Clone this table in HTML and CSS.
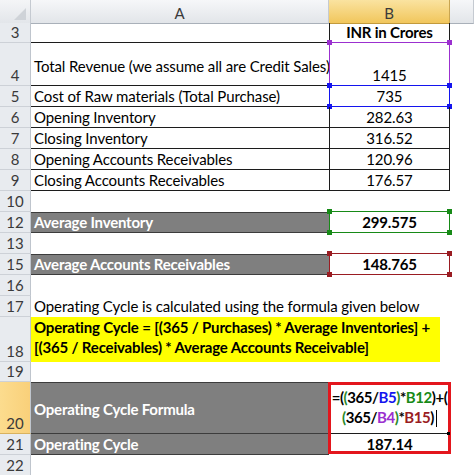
FILE: index.html
```html
<!DOCTYPE html>
<html>
<head>
<meta charset="utf-8">
<link rel="stylesheet" href="styles.css">
</head>
<body>
<div class="sheet">
  <div class="row hdr">
    <div class="corner"><svg width="31" height="23" viewBox="0 0 31 23"><polygon points="26,8 26,20 14,20" fill="#cfd3d8"/></svg></div>
    <div class="ch">A</div>
    <div class="ch sel">B</div>
    <div class="ch"></div>
  </div>

  <div class="row h20">
    <div class="rh">3</div>
    <div class="c a t"></div>
    <div class="c b t bold">INR in Crores</div>
    <div class="c"></div>
  </div>

  <div class="row h43">
    <div class="rh">4</div>
    <div class="c a t mid">Total Revenue (we assume all are Credit Sales)</div>
    <div class="c b t">1415<span class="ref purple"><i class="hd tl"></i><i class="hd tr"></i><i class="hd bl"></i><i class="hd br"></i></span></div>
    <div class="c"></div>
  </div>

  <div class="row h21">
    <div class="rh">5</div>
    <div class="c a t">Cost of Raw materials (Total Purchase)</div>
    <div class="c b t">735<span class="ref blue"><i class="hd tl"></i><i class="hd tr"></i><i class="hd bl"></i><i class="hd br"></i></span></div>
    <div class="c"></div>
  </div>

  <div class="row h21">
    <div class="rh">6</div>
    <div class="c a t">Opening Inventory</div>
    <div class="c b t">282.63</div>
    <div class="c"></div>
  </div>

  <div class="row h21">
    <div class="rh">7</div>
    <div class="c a t">Closing Inventory</div>
    <div class="c b t">316.52</div>
    <div class="c"></div>
  </div>

  <div class="row h21">
    <div class="rh">8</div>
    <div class="c a t">Opening Accounts Receivables</div>
    <div class="c b t">120.96</div>
    <div class="c"></div>
  </div>

  <div class="row h21">
    <div class="rh">9</div>
    <div class="c a t">Closing Accounts Receivables</div>
    <div class="c b t">176.57</div>
    <div class="c"></div>
  </div>

  <div class="row h21">
    <div class="rh">10</div>
    <div class="c a"></div>
    <div class="c b"></div>
    <div class="c"></div>
  </div>

  <div class="row h21">
    <div class="rh">12</div>
    <div class="c a gray">Average Inventory</div>
    <div class="c b bold">299.575<span class="ref green"><i class="hd tl"></i><i class="hd tr"></i><i class="hd bl"></i><i class="hd br"></i></span></div>
    <div class="c"></div>
  </div>

  <div class="row h21">
    <div class="rh">13</div>
    <div class="c a"></div>
    <div class="c b"></div>
    <div class="c"></div>
  </div>

  <div class="row h21">
    <div class="rh">15</div>
    <div class="c a gray">Average Accounts Receivables</div>
    <div class="c b bold">148.765<span class="ref dkred"><i class="hd tl"></i><i class="hd tr"></i><i class="hd bl"></i><i class="hd br"></i></span></div>
    <div class="c"></div>
  </div>

  <div class="row h21">
    <div class="rh">16</div>
    <div class="c a"></div>
    <div class="c b"></div>
    <div class="c"></div>
  </div>

  <div class="row h21">
    <div class="rh">17</div>
    <div class="c a">Operating Cycle is calculated using the formula given below</div>
    <div class="c b"></div>
    <div class="c"></div>
  </div>

  <div class="row h45">
    <div class="rh">18</div>
    <div class="yel">Operating Cycle = [(365 / Purchases) * Average Inventories] +<br>[(365 / Receivables) * Average Accounts Receivable]</div>
    <div class="c"></div>
  </div>

  <div class="row h20">
    <div class="rh">19</div>
    <div class="c a"></div>
    <div class="c b"></div>
    <div class="c"></div>
  </div>

  <div class="row h52">
    <div class="rh selrow">20</div>
    <div class="c a gray mid">Operating Cycle Formula</div>
    <div class="c b formula">=(<span class="pg">(</span>365/<span class="cb">B5</span><span class="pg">)</span>*<span class="cgr">B12</span>)+(<br><span class="pg">(</span>365/<span class="cp">B4</span><span class="pg">)</span>*<span class="cr">B15</span>)<span class="cursor"></span><span class="redbox"></span><i class="fill"></i></div>
    <div class="c"></div>
  </div>

  <div class="row h21">
    <div class="rh">21</div>
    <div class="c a gray notop">Operating Cycle</div>
    <div class="c b bold">187.14</div>
    <div class="c"></div>
  </div>

  <div class="row h21">
    <div class="rh">22</div>
    <div class="c a"></div>
    <div class="c b"></div>
    <div class="c"></div>
  </div>
</div>
</body>
</html>
```

FILE: styles.css
```css
* {
  box-sizing: border-box;
}

html,
body {
  margin: 0;
  padding: 0;
  background: #ffffff;
}

body {
  font-family: Lato, "Open Sans", sans-serif;
  font-size: 15px;
  color: #000000;
  overflow: hidden;
}

.sheet {
  width: 474px;
}

.row {
  display: grid;
  grid-template-columns: 31px 298px 121px 24px;
}

.hdr { height: 23px; }
.h20 { height: 20px; }
.h21 { height: 21px; }
.h43 { height: 43px; }
.h45 { height: 45px; }
.h52 { height: 52px; }

/* column headers */
.corner {
  background: linear-gradient(#f4f5f7, #e3e6ea);
  border-right: 1px solid #c5cad1;
  border-bottom: 1px solid #a9b0b9;
}

.corner svg {
  display: block;
}

.ch {
  display: flex;
  align-items: center;
  justify-content: center;
  padding-top: 2px;
  background: linear-gradient(#f6f7f9, #e2e5e9);
  border-right: 1px solid #c5cad1;
  border-bottom: 1px solid #a9b0b9;
  color: #3a3a3a;
  line-height: 18px;
}

.ch.sel {
  background: linear-gradient(#fae3a0, #f1c65c);
  border-right-color: #c9a550;
  border-bottom-color: #c29a3c;
}

/* row headers */
.rh {
  display: flex;
  align-items: flex-end;
  justify-content: center;
  padding-bottom: 1px;
  line-height: 18px;
  background: #e8ebef;
  border-right: 1px solid #bfc5cd;
  border-bottom: 1px solid #cdd1d7;
  color: #3a3a3a;
}

.rh.selrow {
  background: linear-gradient(90deg, #fcdc8e, #f9d07a);
  border-bottom-color: #d9b25e;
}

/* cells */
.c {
  display: flex;
  align-items: flex-end;
  padding: 0 3px 1px;
  line-height: 18px;
  white-space: nowrap;
  letter-spacing: -0.1px;
  border-bottom: 1px solid transparent;
  min-width: 0;
}

.c.b {
  position: relative;
  justify-content: center;
  border-left: 1px solid transparent;
  border-right: 1px solid transparent;
}

.c.t {
  border-bottom-color: #1c1c1c;
}

.c.b.t {
  border-left-color: #1c1c1c;
  border-right-color: #1c1c1c;
}

.c.mid {
  align-items: center;
  padding-bottom: 0;
  padding-top: 3px;
}

.bold {
  font-weight: 700;
  letter-spacing: -0.2px;
}

.gray {
  background: #7f7f7f;
  color: #ffffff;
  font-weight: 700;
  letter-spacing: -0.2px;
  border-top: 1px solid #3c3c3c;
  border-bottom: 1px solid #3c3c3c;
}

.gray.mid {
  padding-top: 1px;
}

.gray.notop {
  border-top: none;
}

.yel {
  grid-column: span 2;
  margin-right: 10px;
  background: #ffff00;
  font-weight: 700;
  letter-spacing: -0.17px;
  line-height: 20px;
  padding: 0 3px;
  white-space: nowrap;
}

/* formula cell */
.c.b.formula {
  display: block;
  text-align: center;
  font-weight: 700;
  line-height: 20px;
  padding: 5px 0 0;
  letter-spacing: -0.45px;
  border-bottom-color: #1c1c1c;
}

.pg { color: #2a8a2a; }
.cb { color: #1414ee; }
.cgr { color: #178a17; }
.cp { color: #9b30cf; }
.cr { color: #9a1c22; }

.cursor {
  display: inline-block;
  width: 1px;
  height: 17px;
  background: #000000;
  vertical-align: -4px;
  margin-left: 2px;
}

/* formula reference highlight boxes */
.ref {
  position: absolute;
  left: -1px;
  right: -1px;
  top: -1px;
  bottom: -1px;
  border: 1px solid currentColor;
  pointer-events: none;
}

.purple { color: #9b30cf; }
.blue { color: #1414ee; }
.green { color: #178a17; }
.dkred { color: #9a1c22; }

.hd {
  position: absolute;
  width: 5px;
  height: 5px;
  background: currentColor;
}

.hd.tl { left: -3px; top: -3px; }
.hd.tr { right: -3px; top: -3px; }
.hd.bl { left: -3px; bottom: -3px; }
.hd.br { right: -3px; bottom: -3px; }

.redbox {
  position: absolute;
  left: -2px;
  right: -2px;
  top: 0;
  bottom: -21px;
  border: 3px solid #e3161d;
  pointer-events: none;
}

.fill {
  position: absolute;
  right: -1px;
  bottom: -2px;
  width: 3px;
  height: 3px;
  background: #000000;
}
```
